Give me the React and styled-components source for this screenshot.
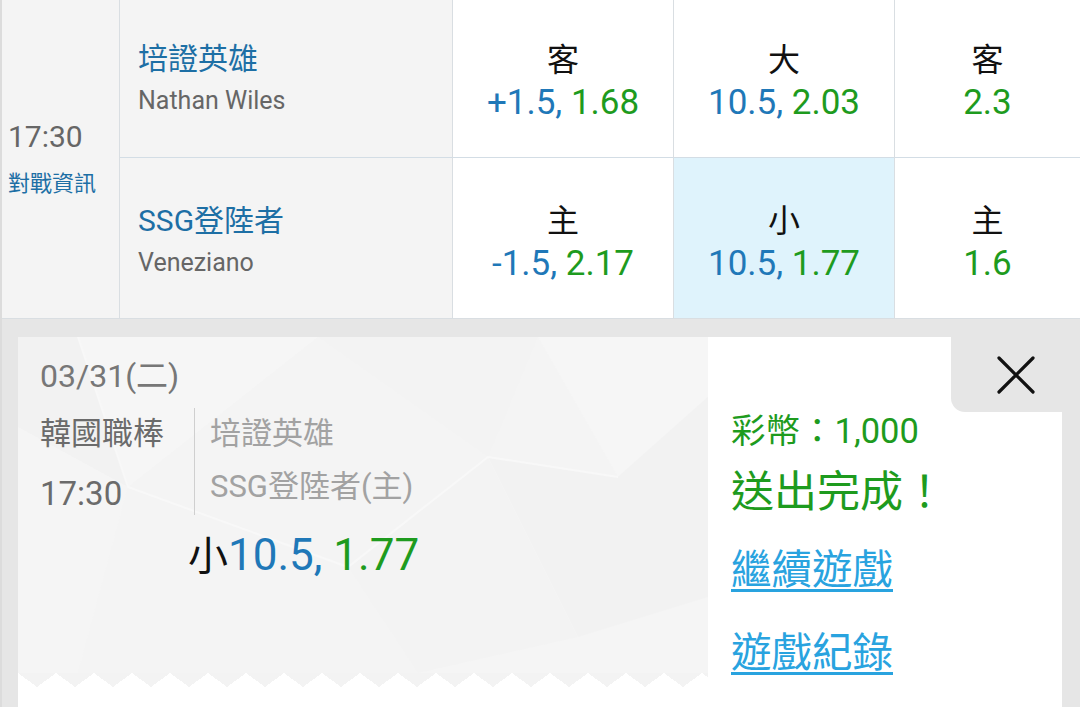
import styled, { createGlobalStyle } from 'styled-components';

const GlobalStyle = createGlobalStyle`
  html, body {
    margin: 0;
    padding: 0;
  }
  body {
    width: 1080px;
    height: 707px;
    overflow: hidden;
    background: #e6e6e6;
    font-family: Roboto, "Noto Sans CJK TC", sans-serif;
  }
`;

const Page = styled.div`
  width: 1080px;
  height: 707px;
  overflow: hidden;
  background: #e6e6e6;
  border-left: 2px solid #dcdcdc;
  box-sizing: border-box;
  display: flex;
  flex-direction: column;
`;

/* ---------- match table ---------- */

const MatchTable = styled.div`
  display: grid;
  grid-template-columns: 118px 333px 221px 221px 1fr;
  grid-template-rows: 158px 161px;
  background: #fff;
  flex-shrink: 0;
`;

const TimeCell = styled.div`
  grid-row: 1 / span 2;
  background: #f4f4f4;
  border-right: 1px solid #d9dee2;
  border-bottom: 1px solid #d9dee2;
  display: flex;
  flex-direction: column;
  justify-content: center;
  padding-left: 6px;
`;

const TimeText = styled.div`
  font-size: 30px;
  line-height: 36px;
  color: #666;
`;

const InfoLink = styled.div`
  margin-top: 14px;
  font-size: 22px;
  line-height: 30px;
  color: #1d6fa5;
`;

const TeamCell = styled.div`
  background: #f4f4f4;
  border-right: 1px solid #d9dee2;
  border-bottom: 1px solid ${(p) => (p.$last ? '#d9dee2' : '#d3dde5')};
  display: flex;
  flex-direction: column;
  justify-content: center;
  padding-left: 18px;
  padding-top: ${(p) => (p.$last ? 5 : 0)}px;
`;

const TeamName = styled.div`
  font-size: 30px;
  line-height: 36px;
  color: #1d6fa5;
`;

const TeamEn = styled.div`
  margin-top: 8px;
  font-size: 25px;
  line-height: 32px;
  color: #666;
`;

const OddsCell = styled.div`
  background: ${(p) => (p.$active ? '#dff3fc' : '#fff')};
  border-right: ${(p) => (p.$edge ? 'none' : '1px solid #d9dee2')};
  border-bottom: 1px solid ${(p) => (p.$last ? '#d9dee2' : '#d3dde5')};
  display: flex;
  flex-direction: column;
  align-items: center;
  justify-content: center;
  padding-top: ${(p) => (p.$last ? 9 : 7)}px;
`;

const Side = styled.div`
  font-size: 32px;
  line-height: 40px;
  color: #111;
`;

const Odds = styled.div`
  margin-top: 2px;
  font-size: 35px;
  line-height: 42px;
  white-space: nowrap;
`;

const Line = styled.span`
  color: #1f78b8;
`;

const Price = styled.span`
  color: #1e9b1e;
`;

/* ---------- bet slip ---------- */

const SlipArea = styled.div`
  flex: 1;
  padding: 18px 18px 0 16px;
  display: flex;
`;

const Slip = styled.div`
  flex: 1;
  display: grid;
  grid-template-columns: 690px 1fr;
  background: #fff;
`;

const Ticket = styled.div`
  display: flex;
  flex-direction: column;
`;

const TicketFace = styled.div`
  position: relative;
  height: 336px;
  background: #f4f4f4;
  overflow: hidden;
  padding: 19px 0 0 22px;
  box-sizing: border-box;
`;

const Facets = styled.svg`
  position: absolute;
  inset: 0;
  width: 100%;
  height: 100%;
`;

const TicketBody = styled.div`
  position: relative;
`;

const Zigzag = styled.div`
  height: 14px;
  background-color: #f3f3f3;
  background-image: conic-gradient(from 126.4deg at 50% 0, #fff 107.2deg, transparent 0);
  background-size: 38px 14px;
  background-position: 19px 0;
  background-repeat: repeat-x;
`;

const DateLine = styled.div`
  font-size: 32px;
  line-height: 40px;
  color: #777;
`;

const InfoRow = styled.div`
  display: flex;
  margin-top: 8px;
`;

const MetaCol = styled.div`
  width: 154px;
  display: flex;
  flex-direction: column;
`;

const MetaText = styled.div`
  font-size: ${(p) => p.$size}px;
  line-height: 60px;
  color: #6b6b6b;
`;

const TeamsCol = styled.div`
  margin-top: 4px;
  border-left: 1px solid #cfcfcf;
  padding-left: 15px;
  height: 107px;
  display: flex;
  flex-direction: column;
`;

const SlipTeam = styled.div`
  font-size: 31px;
  line-height: 55px;
  margin-top: -2px;
  color: #a2a2a2;
  white-space: nowrap;
`;

const BetLine = styled.div`
  margin: 6px 0 0 148px;
  font-size: 44px;
  line-height: 50px;
  white-space: nowrap;
`;

const BetSide = styled.span`
  font-size: 40px;
  color: #111;
`;

const Result = styled.div`
  display: flex;
  flex-direction: column;
`;

const ResultHead = styled.div`
  display: flex;
  justify-content: flex-end;
`;

const CloseTab = styled.button`
  width: 111px;
  height: 75px;
  border: none;
  padding: 0 0 0 18px;
  background: #e6e6e6;
  border-bottom-left-radius: 14px;
  display: flex;
  align-items: center;
  justify-content: center;
  cursor: pointer;
`;

const ResultBody = styled.div`
  padding-left: 23px;
  display: flex;
  flex-direction: column;
  align-items: flex-start;
`;

const Coins = styled.div`
  font-size: 34.5px;
  line-height: 38px;
  color: #1e9b1e;
`;

const Done = styled.div`
  margin-top: 16px;
  font-size: 43px;
  line-height: 52px;
  color: #1e9b1e;
`;

const ActionLink = styled.a`
  margin-top: ${(p) => p.$gap}px;
  font-size: 40.5px;
  line-height: 52px;
  color: #29a3df;
  text-decoration: underline;
  text-decoration-thickness: 3px;
  text-underline-offset: 5px;
  cursor: pointer;
`;

const rows = [
  {
    name: '培證英雄',
    en: 'Nathan Wiles',
    cells: [
      { side: '客', line: '+1.5, ', price: '1.68' },
      { side: '大', line: '10.5, ', price: '2.03' },
      { side: '客', line: '', price: '2.3' },
    ],
  },
  {
    name: 'SSG登陸者',
    en: 'Veneziano',
    cells: [
      { side: '主', line: '-1.5, ', price: '2.17' },
      { side: '小', line: '10.5, ', price: '1.77', active: true },
      { side: '主', line: '', price: '1.6' },
    ],
  },
];

const CloseIcon = () => (
  <svg width="38" height="38" viewBox="0 0 38 38">
    <path d="M2 2 L36 36 M36 2 L2 36" stroke="#111" strokeWidth="3.2" strokeLinecap="round" />
  </svg>
);

const App = () => {
  return (
    <Page>
      <GlobalStyle />
      <MatchTable>
        <TimeCell>
          <TimeText>17:30</TimeText>
          <InfoLink>對戰資訊</InfoLink>
        </TimeCell>
        {rows.map((row, r) => [
          <TeamCell key={`t${r}`} $last={r === 1}>
            <TeamName>{row.name}</TeamName>
            <TeamEn>{row.en}</TeamEn>
          </TeamCell>,
          ...row.cells.map((c, i) => (
            <OddsCell key={`c${r}${i}`} $active={c.active} $edge={i === 2} $last={r === 1}>
              <Side>{c.side}</Side>
              <Odds>
                {c.line && <Line>{c.line}</Line>}
                <Price>{c.price}</Price>
              </Odds>
            </OddsCell>
          )),
        ])}
      </MatchTable>

      <SlipArea>
        <Slip>
          <Ticket>
            <TicketFace>
              <Facets viewBox="0 0 690 336" preserveAspectRatio="none">
                <polygon points="0,0 60,0 110,150 0,90" fill="#f2f2f2" />
                <polygon points="60,0 300,0 110,150" fill="#f6f6f6" />
                <polygon points="300,0 520,0 470,120" fill="#f3f3f3" />
                <polygon points="520,0 690,0 690,60 600,140" fill="#f6f6f6" />
                <polygon points="470,120 600,140 690,60 690,260 560,300" fill="#f2f2f2" />
                <polygon points="0,90 110,150 60,336 0,336" fill="#f5f5f5" />
                <polygon points="110,150 300,0 470,120 330,230" fill="#f4f4f4" />
                <polygon points="330,230 470,120 560,300 400,336" fill="#f3f3f3" />
                <polygon points="60,336 110,150 330,230 400,336" fill="#f4f4f4" />
                <polygon points="560,300 690,260 690,336 400,336" fill="#f5f5f5" />
                <path d="M60 0 L110 150 L330 230 L470 120 L600 140" stroke="#f8f8f8" strokeWidth="2" fill="none" />
              </Facets>
              <TicketBody>
                <DateLine>03/31(二)</DateLine>
                <InfoRow>
                  <MetaCol>
                    <MetaText $size={31}>韓國職棒</MetaText>
                    <MetaText $size={33}>17:30</MetaText>
                  </MetaCol>
                  <TeamsCol>
                    <SlipTeam>培證英雄</SlipTeam>
                    <SlipTeam>SSG登陸者(主)</SlipTeam>
                  </TeamsCol>
                </InfoRow>
                <BetLine>
                  <BetSide>小</BetSide>
                  <Line>10.5, </Line>
                  <Price>1.77</Price>
                </BetLine>
              </TicketBody>
            </TicketFace>
            <Zigzag />
          </Ticket>

          <Result>
            <ResultHead>
              <CloseTab aria-label="close">
                <CloseIcon />
              </CloseTab>
            </ResultHead>
            <ResultBody>
              <Coins>彩幣：1,000</Coins>
              <Done>送出完成！</Done>
              <ActionLink $gap={26}>繼續遊戲</ActionLink>
              <ActionLink $gap={31}>遊戲紀錄</ActionLink>
            </ResultBody>
          </Result>
        </Slip>
      </SlipArea>
    </Page>
  );
};

export default App;
